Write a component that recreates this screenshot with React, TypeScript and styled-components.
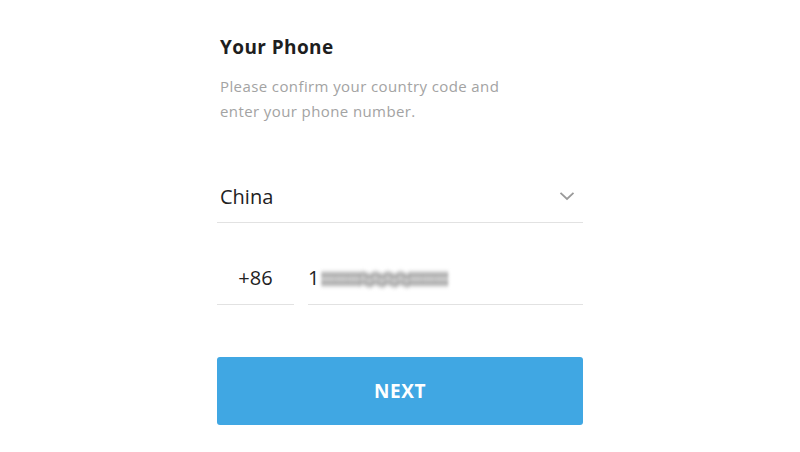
import React from "react";
import styled, { createGlobalStyle } from "styled-components";

const Global = createGlobalStyle`
  html, body { margin: 0; padding: 0; background: #fff; }
  body { font-family: "Open Sans", "Noto Sans", sans-serif; }
`;

const Page = styled.div`
  width: 800px;
  height: 452px;
  display: flex;
  justify-content: center;
  background: #fff;
`;

const Form = styled.div`
  width: 366px;
  padding-top: 36px;
  display: flex;
  flex-direction: column;
`;

const Header = styled.div`
  padding: 0 3px;
`;

const Title = styled.h1`
  margin: 0;
  font-size: 19px;
  line-height: 22px;
  font-weight: 700;
  letter-spacing: 0.4px;
  color: #1e1e1e;
`;

const Description = styled.p`
  margin: 16px 0 0;
  font-size: 15px;
  line-height: 25px;
  letter-spacing: 0.4px;
  color: #a3a3a3;
`;

const CountryField = styled.div`
  margin-top: 52px;
  height: 47px;
  display: flex;
  align-items: center;
  justify-content: space-between;
  padding: 0 8px 6px 3px;
  border-bottom: 1px solid #e2e2e2;
  box-sizing: border-box;
`;

const FieldText = styled.span`
  font-size: 20px;
  color: #222;
`;

const PhoneRow = styled.div`
  margin-top: 37px;
  display: flex;
  gap: 14px;
`;

const InputBox = styled.div<{ $width?: number; $center?: boolean }>`
  ${(p) => (p.$width ? `width: ${p.$width}px; flex: none;` : "flex: 1;")}
  height: 45px;
  display: flex;
  align-items: center;
  justify-content: ${(p) => (p.$center ? "center" : "flex-start")};
  border-bottom: 1px solid #e2e2e2;
  box-sizing: border-box;
  padding-bottom: 9px;
`;

const Blurred = styled.span`
  display: inline-block;
  margin-left: 1px;
  font-size: 26px;
  line-height: 20px;
  font-weight: 700;
  color: #8a8a8a;
  filter: blur(1.6px);
  letter-spacing: -4px;
  transform: scale(1.15, 1.5);
  transform-origin: left center;
`;

const NextButton = styled.button`
  margin-top: 52px;
  height: 68px;
  width: 100%;
  border: none;
  border-radius: 3px;
  background: #40a7e3;
  color: #fff;
  font-family: inherit;
  font-size: 19px;
  font-weight: 700;
  letter-spacing: 0.6px;
  cursor: pointer;
`;

const Chevron = () => (
  <svg width="16" height="10" viewBox="0 0 16 10" fill="none">
    <path d="M1.5 1.8L8 8L14.5 1.8" stroke="#9a9a9a" strokeWidth="1.8" />
  </svg>
);

export default function App() {
  return (
    <Page>
      <Global />
      <Form>
        <Header>
          <Title>Your Phone</Title>
          <Description>
            Please confirm your country code and
            <br />
            enter your phone number.
          </Description>
        </Header>
        <CountryField>
          <FieldText>China</FieldText>
          <Chevron />
        </CountryField>
        <PhoneRow>
          <InputBox $width={77} $center>
            <FieldText>+86</FieldText>
          </InputBox>
          <InputBox>
            <FieldText>1</FieldText>
            <Blurred>===≈≈≈≈===</Blurred>
          </InputBox>
        </PhoneRow>
        <NextButton>NEXT</NextButton>
      </Form>
    </Page>
  );
}
